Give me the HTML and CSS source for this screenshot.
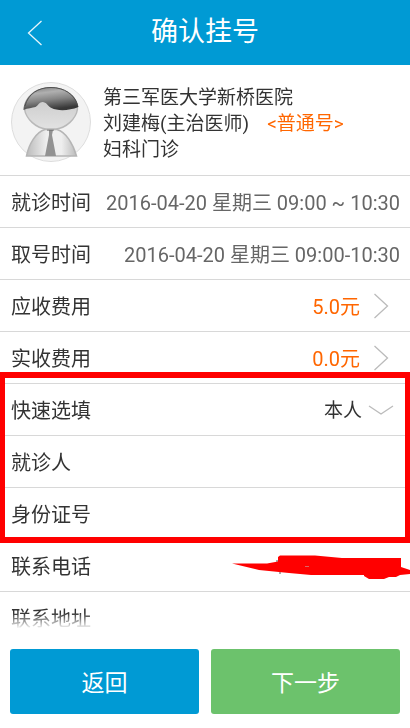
FILE: index.html
```html
<!DOCTYPE html>
<html lang="zh-CN">
<head>
<meta charset="utf-8">
<meta name="viewport" content="width=device-width, initial-scale=1">
<title>确认挂号</title>
<link rel="stylesheet" href="styles.css">
</head>
<body>
<header class="topbar">
  <button class="back" type="button" aria-label="后退">
    <svg width="16" height="26" viewBox="0 0 16 26" aria-hidden="true"><path d="M14.5 1 1.5 13l13 12"/></svg>
  </button>
  <h1 class="title">确认挂号</h1>
</header>

<form class="form" id="register">
  <section class="doctor">
    <svg class="avatar" viewBox="0 0 80 80" aria-hidden="true">
      <defs>
        <linearGradient id="hair" x1="0.1" y1="0" x2="0.4" y2="1">
          <stop offset="0" stop-color="#777"/><stop offset="0.3" stop-color="#b0b0b0"/><stop offset="0.6" stop-color="#858585"/><stop offset="1" stop-color="#383838"/>
        </linearGradient>
        <linearGradient id="face" x1="0" y1="0" x2="0" y2="1">
          <stop offset="0" stop-color="#c4c4c4"/><stop offset="1" stop-color="#e2e2e2"/>
        </linearGradient>
        <linearGradient id="coat" x1="0" y1="0" x2="1" y2="0">
          <stop offset="0" stop-color="#bbb"/><stop offset="0.4" stop-color="#eee"/><stop offset="0.7" stop-color="#eee"/><stop offset="1" stop-color="#bbb"/>
        </linearGradient>
      </defs>
      <circle cx="40" cy="40" r="39.5" fill="#f3f3f3" stroke="#ddd"/>
      <path d="M15.500 74C18 62 25 50 34 47.500h12C55 50 62 62 65.500 74Z" fill="url(#coat)" stroke="#b5b5b5" stroke-width="1.500"/>
      <path d="M38 48h4l-1 5 4 21H34l4-21Z" fill="#929292"/>
      <path d="M36 46.500h7v2h-7Z" fill="#666"/>
      <path d="M13.500 27C15 37 25 46 35 47h10c10-1 20-10 21.500-20C64 12 53 6 40 6S17 13 13.500 27Z" fill="url(#face)" stroke="#b9b9b9" stroke-width="1.500"/>
      <path d="M12.500 28C13 14 25 5 40 5s26 9 27.500 20c-10 4-21 4-27 1-4-2-5-6-9-6-3 0-4 3-7 5-3 1-8 1-12 3Z" fill="url(#hair)"/>
      <path d="M14 24C17 12 27 5.500 40 5.500s24 7 26.500 18" fill="none" stroke="#505050"/>
    </svg>
    <div class="summary">
      <p>第三军医大学新桥医院</p>
      <p>刘建梅(主治医师)<span class="kind">&lt;普通号&gt;</span></p>
      <p>妇科门诊</p>
    </div>
  </section>

  <div class="row"><span class="label">就诊时间</span><span class="value">2016-04-20 星期三 09:00 ~ 10:30</span></div>
  <div class="row"><span class="label">取号时间</span><span class="value">2016-04-20 星期三 09:00-10:30</span></div>
  <a class="row" href="#due"><span class="label">应收费用</span><span class="value price">5.0元</span>
    <svg class="next" width="16" height="26" viewBox="0 0 16 26" aria-hidden="true"><path d="M1.500 1l13 12-13 12"/></svg></a>
  <a class="row" href="#paid"><span class="label">实收费用</span><span class="value price">0.0元</span>
    <svg class="next" width="16" height="26" viewBox="0 0 16 26" aria-hidden="true"><path d="M1.500 1l13 12-13 12"/></svg></a>

  <div class="marked">
    <div class="row"><label class="label" for="quick">快速选填</label>
      <select class="pick" id="quick"><option>本人</option></select>
      <svg class="down" width="26" height="10" viewBox="0 0 26 10" aria-hidden="true"><path d="M1 1l12 8 12-8"/></svg></div>
    <div class="row"><label class="label" for="patient">就诊人</label><input class="field" id="patient" type="text"></div>
    <div class="row"><label class="label" for="idno">身份证号</label><input class="field" id="idno" type="text"></div>
  </div>

  <div class="row phone"><label class="label" for="tel">联系电话</label><input class="field" id="tel" type="tel">
    <svg class="scribble" width="178" height="24" viewBox="0 0 178 24" aria-hidden="true"><path d="M45 5v4M48 16v3" stroke="#555"/><path d="M0 8.500h35l11-2V2l2-1.500h35L110 3h59v9l9 3v4l-10 1-4 2h-7l-5 2h-15l-5-3v-1H79l-22-2-20-2-10-1Z" fill="#f00"/><path d="M73 11.500h4" stroke="#d66"/></svg></div>
  <div class="row"><label class="label" for="addr">联系地址</label><input class="field" id="addr" type="text"></div>
</form>

<footer class="actions">
  <button class="btn" type="button">返回</button>
  <button class="btn confirm" type="submit" form="register">下一步</button>
</footer>
</body>
</html>
```
FILE: styles.css
```css
* { box-sizing: border-box; }

body {
  margin: 0;
  height: 100vh;
  display: flex;
  flex-direction: column;
  overflow: hidden;
  background: #fff;
  color: #333;
  font-family: Roboto, "Noto Sans CJK SC", sans-serif;
  font-size: 20px;
}

button, input, select { font: inherit; color: inherit; border: 0; }

.topbar {
  flex: none;
  display: grid;
  grid-template-columns: 70px 1fr 70px;
  height: 65px;
  align-items: center;
  background: #009ad4;
  color: #fff;
}

.back { height: 65px; padding: 0; background: none; }
.back svg { display: block; margin: 0 auto; }
.back path { fill: none; stroke: #e6f5fb; stroke-width: 1.3; }

.title { margin: 0; text-align: center; font-size: 27px; line-height: 65px; font-weight: 400; }

.form {
  position: relative;
  flex: 1;
  min-height: 0;
  overflow-y: auto;
  overflow-x: hidden;
  scrollbar-width: none;
  mask-image: linear-gradient(to top, transparent, #000 16px);
}

.doctor {
  display: flex;
  gap: 12px;
  padding: 17px 11px 12px;
  border-bottom: 1px solid #d8d8d8;
}

.avatar { flex: none; width: 80px; height: 80px; }
.summary { padding-top: 3px; font-size: 19px; line-height: 26px; }
.summary p { margin: 0; height: 26px; }
.kind { margin-left: 18px; color: #f60; }

.row {
  display: flex;
  align-items: center;
  height: 52px;
  padding: 0 10px 0 11px;
  border-bottom: 1px solid #d8d8d8;
  color: inherit;
  text-decoration: none;
}

.label { flex: none; }
.value { flex: 1; text-align: right; white-space: nowrap; color: #666; }
.price { color: #f60; }

.next { margin: 0 11px 0 13px; }
.next path, .down path { fill: none; stroke: #bbb; stroke-width: 1.3; }
.down { margin: 0 6px; }

.pick {
  flex: 1;
  appearance: none;
  height: 50px;
  padding: 2px 0 0;
  background: none;
  text-align: right;
  text-align-last: right;
  font-size: 19px;
}

.field { flex: 1; min-width: 0; height: 50px; padding: 0 10px; background: none; text-align: right; outline: 0; }

.marked { position: relative; }
.marked::after {
  content: "";
  position: absolute;
  inset: -12px 0 -3px;
  border: solid #f00;
  border-width: 6px 5px;
  pointer-events: none;
}

.phone { position: relative; }
.scribble { position: absolute; right: 0; top: 15px; pointer-events: none; }

.actions { flex: none; display: flex; gap: 12px; padding: 20px 10px 14px; }
.btn {
  flex: 1;
  height: 65px;
  padding: 0 0 2px;
  border-radius: 3px;
  background: #009ad4;
  color: #fff;
  font-size: 23px;
}
.confirm { background: #6cc26c; }
```
